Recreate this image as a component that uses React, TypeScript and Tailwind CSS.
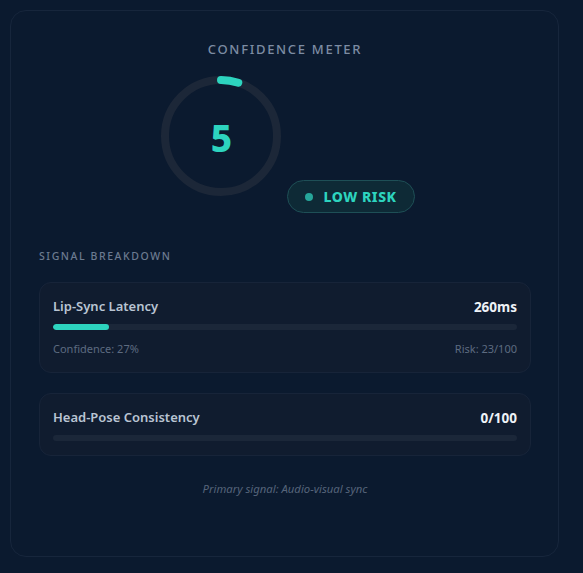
import React from "react";

function Gauge({ value }: { value: number }) {
  const r = 56;
  const c = 2 * Math.PI * r;
  const len = (value / 100) * c;
  return (
    <div className="relative w-[120px] h-[120px] shrink-0">
      <svg width="120" height="120" viewBox="0 0 120 120" className="-rotate-90">
        <circle cx="60" cy="60" r={r} fill="none" stroke="#1c2738" strokeWidth="8" />
        <circle
          cx="60"
          cy="60"
          r={r}
          fill="none"
          stroke="#2dd4bf"
          strokeWidth="8"
          strokeLinecap="round"
          strokeDasharray={`${len} ${c}`}
        />
      </svg>
      <div className="absolute inset-0 flex items-center justify-center pt-[2px] text-[37px] font-extrabold text-[#2dd4bf] leading-none">
        5
      </div>
    </div>
  );
}

function Signal({
  title,
  value,
  pct,
  left,
  right,
}: {
  title: string;
  value: string;
  pct: number;
  left?: string;
  right?: string;
}) {
  return (
    <div className="rounded-[12px] border border-[#172439] bg-[#101c2f] px-[13px] pt-[14px] pb-[14px]">
      <div className="flex items-center justify-between h-[20px]">
        <span className="text-[13px] font-semibold text-[#b9c4d3]">{title}</span>
        <span className="text-[13.5px] font-bold text-[#eef2f7]">{value}</span>
      </div>
      <div className="mt-[7px] h-[6px] rounded-full bg-[#1b2739] overflow-hidden">
        <div className="h-full rounded-full bg-[#2dd4bf]" style={{ width: `${pct}%` }} />
      </div>
      {left !== undefined && (
        <div className="mt-[11px] flex items-center justify-between text-[11px] text-[#5d6b80] h-[17px]">
          <span>{left}</span>
          <span>{right}</span>
        </div>
      )}
    </div>
  );
}

export default function App() {
  return (
    <div
      className="min-h-[573px] w-[583px] bg-[#0b1a2f] p-[10px]"
      style={{ fontFamily: '"Noto Sans", "Open Sans", sans-serif' }}
    >
      <div className="w-[549px] h-[547px] rounded-[16px] border border-[#17263c] bg-[#0b1a2f] pl-[28px] pr-[27px] pt-[29px]">
        <div className="text-center text-[13px] tracking-[0.13em] font-medium text-[#7d8ca3] leading-[18px]">
          CONFIDENCE METER
        </div>
        <div className="mt-[18px] flex justify-center items-start gap-[6px] pl-[6px]">
          <Gauge value={5} />
          <div className="mt-[104px] flex items-center gap-[10px] h-[33px] px-[17px] rounded-full border border-[#1e4f56] bg-[#0e2a36]">
            <span className="w-[8px] h-[8px] rounded-full bg-[#26a69a]" />
            <span className="text-[14px] font-extrabold tracking-[0.04em] text-[#2dd4bf]">LOW RISK</span>
          </div>
        </div>
        <div className="mt-[35px] text-[10.5px] tracking-[0.15em] font-medium text-[#6b7a90] leading-[16px]">
          SIGNAL BREAKDOWN
        </div>
        <div className="mt-[18px] flex flex-col gap-[20px]">
          <Signal title="Lip-Sync Latency" value="260ms" pct={12} left="Confidence: 27%" right="Risk: 23/100" />
          <Signal title="Head-Pose Consistency" value="0/100" pct={0} />
        </div>
        <div className="mt-[25px] text-center text-[11.3px] italic text-[#56647a]">
          Primary signal: Audio-visual sync
        </div>
      </div>
    </div>
  );
}
